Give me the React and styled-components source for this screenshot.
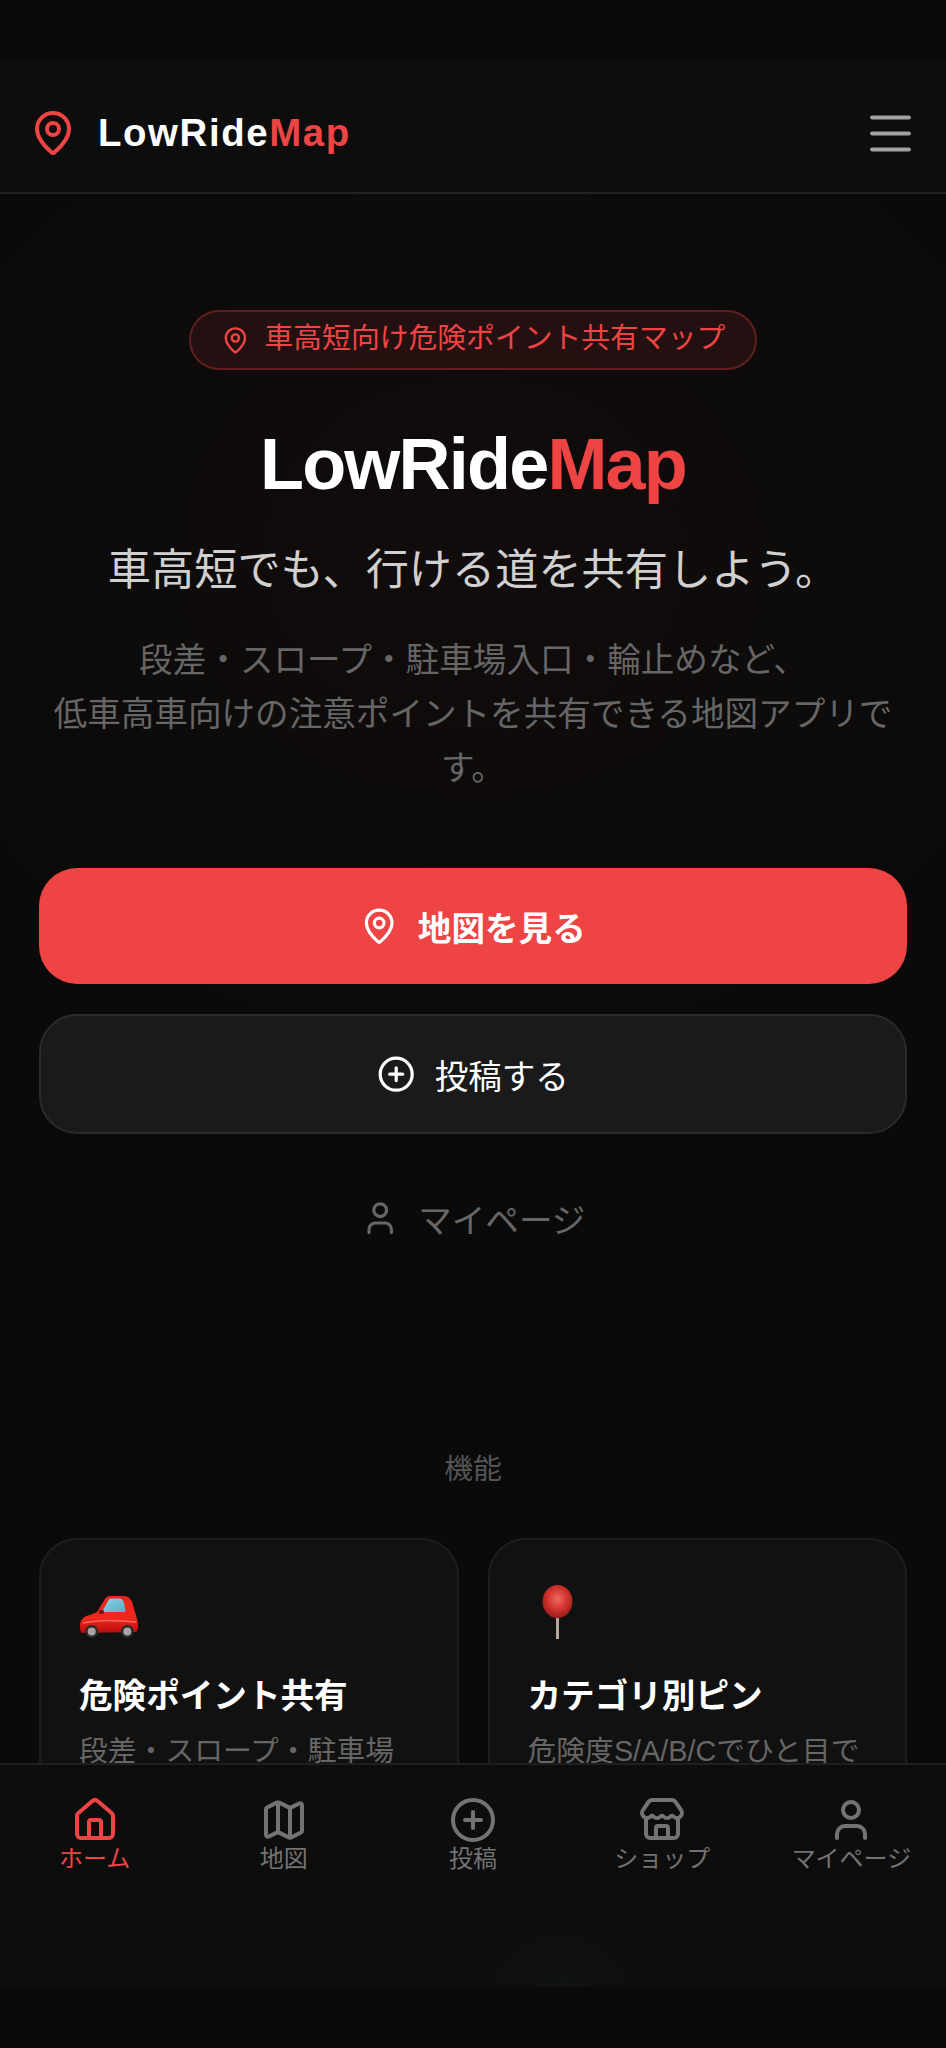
import React from "react";
import styled, { createGlobalStyle } from "styled-components";
import { MapPin, Menu, CirclePlus, User, House, Map as MapIcon, Store } from "lucide-react";

const GlobalStyle = createGlobalStyle`
  html, body { margin: 0; padding: 0; background: #0a0a0a; }
  * { box-sizing: border-box; }
  body { font-family: "Liberation Sans", "Noto Sans CJK JP", sans-serif; }
`;

const navItems = [
  { label: "ホーム", Icon: House, active: true },
  { label: "地図", Icon: MapIcon },
  { label: "投稿", Icon: CirclePlus },
  { label: "ショップ", Icon: Store },
  { label: "マイページ", Icon: User },
];

const features = [
  { emoji: "car", title: "危険ポイント共有", text: "段差・スロープ・駐車場入口などの情報を共有" },
  { emoji: "pin", title: "カテゴリ別ピン", text: "危険度S/A/B/Cでひと目でわかる" },
];

const CarEmoji = () => (
  <svg width="60" height="44" viewBox="0 0 60 44">
    <defs>
      <linearGradient id="carBody" x1="0" y1="0" x2="0" y2="1">
        <stop offset="0" stopColor="#e8261c" />
        <stop offset="0.6" stopColor="#f0281e" />
        <stop offset="1" stopColor="#b50d0d" />
      </linearGradient>
      <linearGradient id="carGlass" x1="0" y1="0" x2="1" y2="1">
        <stop offset="0" stopColor="#8fd2e4" />
        <stop offset="1" stopColor="#5aaec6" />
      </linearGradient>
    </defs>
    <path d="M1 30 C1 25 5 21 11 20 L18 17 L26 4 C27 2 29 1 31 1 L45 1 C50 1 53 5 54 10 L58 24 C60 30 59 36 57 37 L3 38 C1 37 1 33 1 30 Z" fill="url(#carBody)" />
    <path d="M23 17 L29 6 C30 4 31 3.5 33 3.5 L40 3.5 C43 3.5 44 5 45 8 L46.5 15 C46.7 16 46 17 45 17 Z" fill="url(#carGlass)" />
    <rect x="20" y="15" width="5" height="4" rx="1.5" fill="#7a1512" />
    <path d="M4 28 C18 25 40 25 57 27" stroke="#f8665c" strokeWidth="1.5" fill="none" />
    <circle cx="12.7" cy="36.5" r="6.5" fill="#2a2a2a" />
    <circle cx="12.7" cy="36.5" r="4" fill="#a5a5a5" />
    <circle cx="48.3" cy="36.5" r="6.5" fill="#2a2a2a" />
    <circle cx="48.3" cy="36.5" r="4" fill="#a5a5a5" />
  </svg>
);

const PinEmoji = () => (
  <svg width="60" height="54" viewBox="0 0 60 54">
    <defs>
      <radialGradient id="pinHead" cx="0.5" cy="0.42" r="0.6">
        <stop offset="0" stopColor="#ee6a63" />
        <stop offset="0.55" stopColor="#d3322d" />
        <stop offset="1" stopColor="#8f1d1a" />
      </radialGradient>
    </defs>
    <rect x="28" y="28" width="3" height="26" fill="#b5a596" />
    <ellipse cx="29.5" cy="16.5" rx="15" ry="16.5" fill="url(#pinHead)" />
  </svg>
);

const App = () => (
  <Page>
    <GlobalStyle />
    <TopInset />
    <Header>
      <Logo>
        <MapPin size={48} color="#ef4444" />
        <LogoText>
          LowRide<Accent>Map</Accent>
        </LogoText>
      </Logo>
      <Menu size={55} color="#a3a3a3" strokeWidth={1.8} />
    </Header>

    <Main>
      <Hero>
        <Badge>
          <MapPin size={28.8} />
          <BadgeText>車高短向け危険ポイント共有マップ</BadgeText>
        </Badge>
        <Title>
          LowRide<Accent>Map</Accent>
        </Title>
        <Subtitle>車高短でも、行ける道を共有しよう。</Subtitle>
        <Description>
          段差・スロープ・駐車場入口・輪止めなど、
          <br />
          低車高車向けの注意ポイントを共有できる地図アプリです。
        </Description>
        <PrimaryButton>
          <MapPin size={38.4} />
          地図を見る
        </PrimaryButton>
        <SecondaryButton>
          <CirclePlus size={38.4} />
          投稿する
        </SecondaryButton>
        <GhostLink>
          <User size={38.4} />
          マイページ
        </GhostLink>
      </Hero>

      <SectionLabel>機能</SectionLabel>
      <CardGrid>
        {features.map(f => (
          <Card key={f.title}>
            <EmojiBox>{f.emoji === "car" ? <CarEmoji /> : <PinEmoji />}</EmojiBox>
            <CardTitle>{f.title}</CardTitle>
            <CardText>{f.text}</CardText>
          </Card>
        ))}
      </CardGrid>
    </Main>

    <BottomNav>
      {navItems.map(({ label, Icon, active }) => (
        <NavItem key={label} $active={active}>
          <Icon size={48} />
          <span>{label}</span>
        </NavItem>
      ))}
    </BottomNav>
    <BottomInset />
  </Page>
);

export default App;

const Page = styled.div`
  width: 946px;
  height: 2048px;
  display: flex;
  flex-direction: column;
  overflow: hidden;
  background: #0a0a0a;
  color: #fff;
`;

const TopInset = styled.div`
  height: 60px;
  flex: none;
  background: #090909;
`;

const Header = styled.header`
  flex: none;
  height: 134px;
  display: flex;
  align-items: center;
  justify-content: space-between;
  padding: 14px 28px 0 29px;
  background: #0d0d0d;
  border-bottom: 2px solid #222;
`;

const Logo = styled.div`
  display: flex;
  align-items: center;
  gap: 21px;
`;

const LogoText = styled.span`
  font-size: 38.4px;
  font-weight: 700;
  letter-spacing: 1.6px;
`;

const Accent = styled.span`
  color: #ef4444;
`;

const Main = styled.main`
  flex: 1;
  min-height: 0;
  overflow: hidden;
  background: #0a0a0a;
`;

const Hero = styled.section`
  display: flex;
  flex-direction: column;
  align-items: center;
  padding: 116px 39px 0;
  height: 1255px;
  background: radial-gradient(ellipse 620px 520px at 50% 360px, rgba(239, 68, 68, 0.035), rgba(239, 68, 68, 0));
`;

const Badge = styled.div`
  display: flex;
  align-items: center;
  gap: 15px;
  height: 60px;
  padding: 0 30px;
  border-radius: 30px;
  font-size: 28.8px;
  color: #ef4444;
  background: rgba(239, 68, 68, 0.1);
  border: 2px solid rgba(239, 68, 68, 0.3);
`;

const BadgeText = styled.span`
  line-height: 40px;
  padding-bottom: 4px;
`;

const Title = styled.h1`
  margin: 51px 0 0;
  font-size: 72px;
  line-height: 86px;
  font-weight: 700;
  letter-spacing: -1.8px;
`;

const Subtitle = styled.p`
  margin: 34px 0 0;
  font-size: 43.2px;
  line-height: 58px;
  color: #d0d0d0;
`;

const Description = styled.p`
  margin: 35px 0 0;
  font-size: 33.6px;
  line-height: 54px;
  text-align: center;
  color: #666;
`;

const Button = styled.div`
  width: 100%;
  display: flex;
  align-items: center;
  justify-content: center;
  gap: 19.2px;
  border-radius: 38px;
  font-size: 33.6px;
`;

const PrimaryButton = styled(Button)`
  margin-top: 72px;
  height: 116px;
  background: #ef4444;
  font-weight: 700;
`;

const SecondaryButton = styled(Button)`
  margin-top: 30px;
  height: 120px;
  background: #1a1a1a;
  border: 2px solid #2a2a2a;
`;

const GhostLink = styled(Button)`
  margin-top: 24px;
  height: 120px;
  color: #666;
`;

const SectionLabel = styled.h2`
  margin: 0;
  text-align: center;
  font-size: 28.8px;
  line-height: 40px;
  font-weight: 400;
  color: #555;
`;

const CardGrid = styled.div`
  display: grid;
  grid-template-columns: 1fr 1fr;
  gap: 29px;
  margin-top: 49px;
  padding: 0 39px;
`;

const Card = styled.div`
  padding: 38px;
  background: #111;
  border: 2px solid #1e1e1e;
  border-radius: 38px;
`;

const EmojiBox = styled.div`
  height: 72px;
  display: flex;
  align-items: flex-end;
  padding-bottom: 11px;
`;

const CardTitle = styled.h3`
  margin: 23px 0 0;
  font-size: 33.6px;
  line-height: 48px;
  font-weight: 700;
`;

const CardText = styled.p`
  margin: 7px 0 0;
  font-size: 28.8px;
  line-height: 46px;
  color: #666;
`;

const BottomNav = styled.nav`
  flex: none;
  height: 224px;
  display: grid;
  grid-template-columns: repeat(5, 1fr);
  align-items: start;
  padding-top: 31px;
  background:
    radial-gradient(ellipse 90px 70px at 561px 222px, rgba(40, 90, 40, 0.08), rgba(40, 90, 40, 0)),
    #0d0d0d;
  border-top: 2px solid #1f1f1f;
`;

const NavItem = styled.div`
  display: flex;
  flex-direction: column;
  align-items: center;
  color: ${p => (p.$active ? "#ef4444" : "#737373")};
  font-size: 24px;
  line-height: 30px;
  white-space: nowrap;
`;

const BottomInset = styled.div`
  flex: none;
  height: 61px;
  background: #0a0a0a;
`;
